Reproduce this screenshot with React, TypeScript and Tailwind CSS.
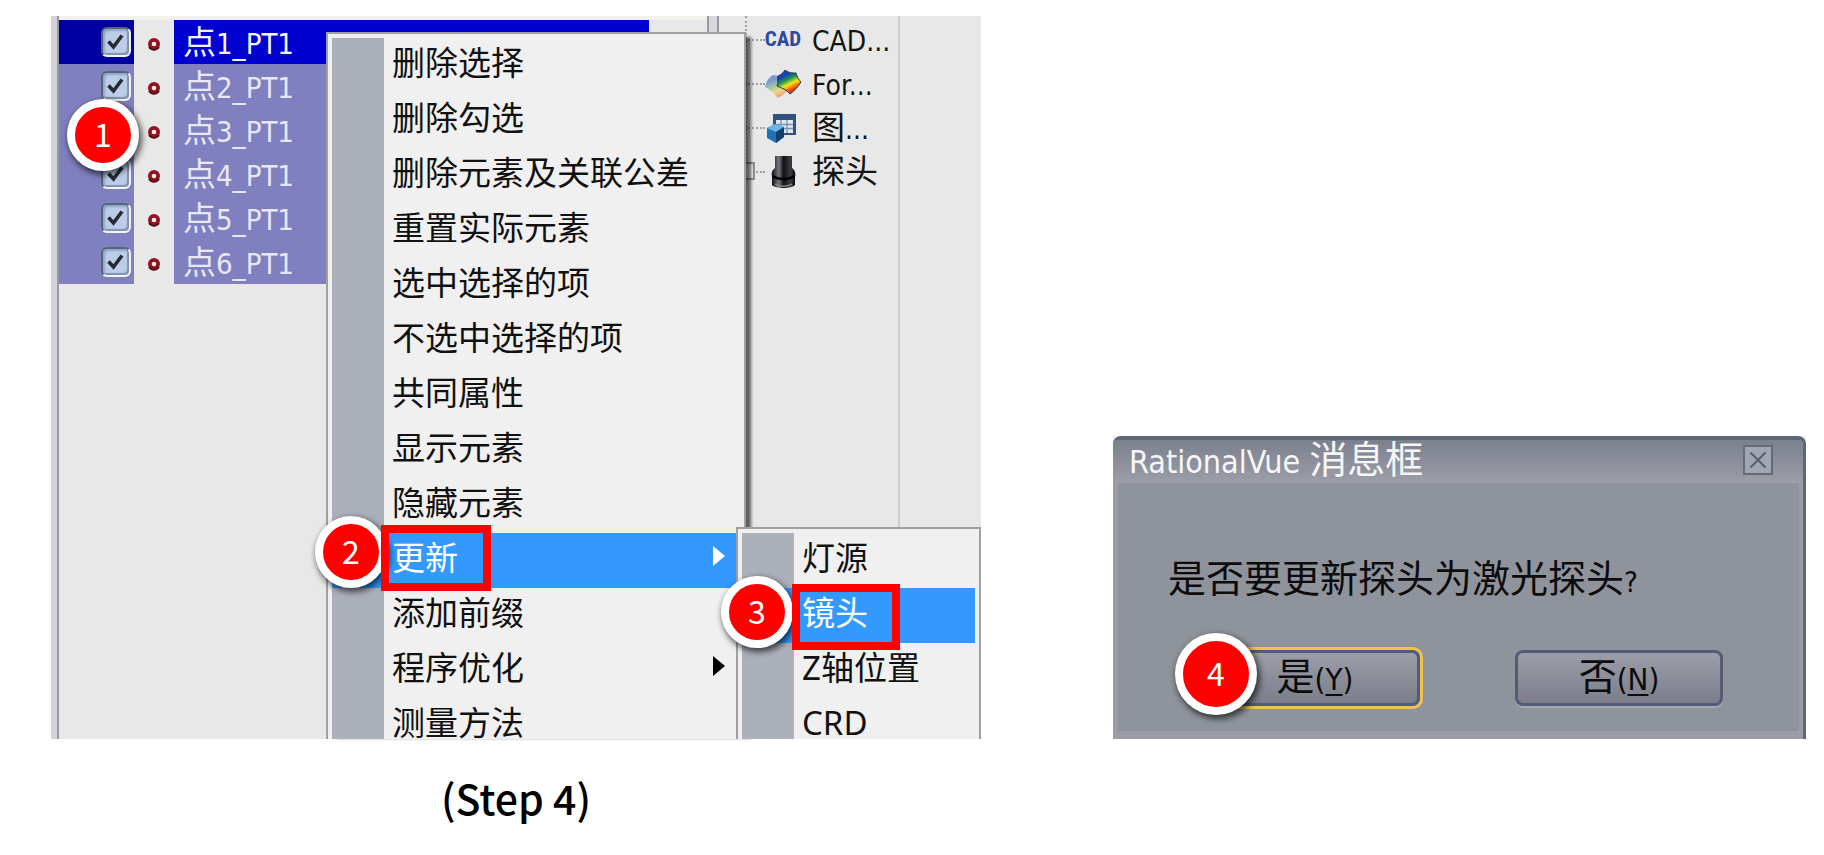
import { ReactNode } from "react";

const points = ["1", "2", "3", "4", "5", "6"];

const menuItems = [
  "删除选择",
  "删除勾选",
  "删除元素及关联公差",
  "重置实际元素",
  "选中选择的项",
  "不选中选择的项",
  "共同属性",
  "显示元素",
  "隐藏元素",
  "更新",
  "添加前缀",
  "程序优化",
  "测量方法",
];

const subItems = ["灯源", "镜头", "Z轴位置", "CRD"];

function Badge({ n, className }: { n: number; className: string }) {
  return (
    <span
      className={`absolute z-10 flex items-center justify-center rounded-full border-8 border-white bg-[#ff0000] font-[family-name:'Noto_Sans_CJK_SC',sans-serif] text-[32px] leading-none text-white shadow-[2px_3px_6px_1px_rgba(0,0,0,0.65)] ${className}`}
    >
      <span className="pb-1">{n}</span>
    </span>
  );
}

function PointRow({ n, first }: { n: string; first: boolean }) {
  const id = `point-${n}`;
  return (
    <li className="relative flex h-11 items-stretch">
      <span
        className={`flex w-[75px] items-center justify-end pr-[3px] ${first ? "bg-[#0000a0]" : "bg-[#8080c0]"}`}
      >
        <span className="relative flex">
          <input
            id={id}
            type="checkbox"
            defaultChecked
            className="peer size-[30px] appearance-none rounded-md border-2 border-t-[#55657a] border-r-[#f0f0f0] border-b-[#f4f4f4] border-l-[#55657a] bg-[#bccdea] shadow-[inset_-2px_-2px_1px_#8292aa,inset_2px_2px_2px_#93a5c0]"
          />
          <svg
            viewBox="0 0 30 30"
            className="pointer-events-none absolute inset-0 hidden size-[30px] peer-checked:block"
            aria-hidden="true"
          >
            <path d="M7.5 14.5 L12.5 20 L21 8.5" fill="none" stroke="#262a33" strokeWidth="3.6" />
          </svg>
        </span>
      </span>
      <span className="flex w-10 items-center justify-center pt-1">
        <svg viewBox="0 0 14 14" className="size-3.5" aria-hidden="true">
          <circle cx="7" cy="7" r="6" fill="#8c1622" />
          <path d="M2 10 A6 6 0 0 0 12 10" fill="none" stroke="#5a0c16" strokeWidth="2" />
          <circle cx="7" cy="7" r="2.3" fill="#ffe8e4" />
        </svg>
      </span>
      <label
        htmlFor={id}
        className={`mr-[58px] flex-1 pt-1 pl-[9px] text-[29px] leading-[40px] whitespace-nowrap ${first ? "bg-[#0000d0] text-[#f4f4ff]" : "bg-[#8080c0] text-[#e8e8f4]"}`}
      >
        <span className="text-[33px] leading-none">点</span>
        {n}_PT1
      </label>
      {n === "3" && <Badge n={1} className="-top-[9px] left-2 size-[72px]" />}
    </li>
  );
}

function TreeRow({ icon, children }: { icon: ReactNode; children: ReactNode }) {
  return (
    <li className="flex h-11 items-center">
      <span className="w-5 border-t-2 border-dotted border-[#a0a0a0]" />
      <span className="flex w-9 justify-center">{icon}</span>
      <span className="pt-[3px] pl-[11px] text-[28px] leading-[41px] whitespace-nowrap text-[#141414]">
        {children}
      </span>
    </li>
  );
}

function MenuRow({
  text,
  active,
  arrow,
  last,
  children,
}: {
  text: string;
  active?: boolean;
  arrow?: boolean;
  last?: boolean;
  children?: ReactNode;
}) {
  return (
    <li className="relative">
      <button
        type="button"
        className={`flex w-full items-stretch text-left font-[family-name:'Noto_Sans','Noto_Sans_CJK_SC',sans-serif] text-[33px] whitespace-nowrap ${last ? "h-[41px]" : "h-[55px]"} ${active ? "bg-[#3399ff] text-white" : "text-[#111111]"}`}
      >
        <span className={`w-[52px] flex-none ${active ? "" : "bg-[#acb0ba]"}`} />
        <span className={`flex-1 pl-2 ${last ? "pt-2 leading-[33px]" : "leading-[49px]"}`}>{text}</span>
        {arrow && (
          <svg viewBox="0 0 12 20" className="mt-[13px] mr-[15px] h-5 w-3" aria-hidden="true">
            <path d="M0 0 L12 10 L0 20 Z" fill={active ? "#ffffff" : "#000000"} />
          </svg>
        )}
      </button>
      {children}
    </li>
  );
}

function SurfaceIcon() {
  return (
    <svg viewBox="0 0 36 28" className="h-7 w-9" aria-hidden="true">
      <defs>
        <linearGradient id="rainbow" x1="0.25" y1="0.1" x2="0.7" y2="1">
          <stop offset="0.15" stopColor="#1c3fb4" />
          <stop offset="0.36" stopColor="#1f9a46" />
          <stop offset="0.56" stopColor="#f6e81c" />
          <stop offset="0.8" stopColor="#f0400c" />
        </linearGradient>
        <linearGradient id="pale" x1="0.3" y1="0" x2="0.7" y2="1">
          <stop offset="0.2" stopColor="#7c98d0" />
          <stop offset="0.5" stopColor="#a8cf9c" />
          <stop offset="0.68" stopColor="#eddc80" />
          <stop offset="0.95" stopColor="#ef8f86" />
        </linearGradient>
      </defs>
      <path d="M8 5 C4 7 1 12 0 17 C4 19 9 23 13 28 C18 25 22 22 24 19 L14 6 Z" fill="url(#pale)" />
      <path
        d="M20 0 C24 3 27 3 31 3 C32 7 34 10 36 12 C33 17 29 21 25 24 C22 20 17 18 12 16 C14 13 12 9 13 6 C16 5 18 3 20 0 Z"
        fill="url(#rainbow)"
        stroke="#2a3250"
        strokeWidth="1"
      />
    </svg>
  );
}

function ViewIcon() {
  return (
    <svg viewBox="0 0 36 30" className="h-[30px] w-9" aria-hidden="true">
      <rect x="8" y="1" width="23" height="21" fill="#33517c" />
      <rect x="11" y="7" width="17" height="13" fill="#dfe6f0" />
      <path d="M11 11.5H28M11 15.5H28M16 7V20M22 7V20" stroke="#7e93b4" strokeWidth="1.3" />
      <path d="M2 15 L10 11 L19 14 L19 24 L11 30 L2 25 Z" fill="#1f73b4" />
      <path d="M2 15 L10 11 L19 14 L11 19 Z" fill="#6bb6e6" />
      <path d="M11 19 L19 14 L19 24 L11 30 Z" fill="#123f6c" />
    </svg>
  );
}

function ProbeIcon() {
  return (
    <svg viewBox="0 0 36 34" className="h-[34px] w-9" aria-hidden="true">
      <defs>
        <linearGradient id="barrel" x1="0" x2="1" y1="0" y2="0">
          <stop offset="0" stopColor="#0a0a0c" />
          <stop offset="0.3" stopColor="#77777e" />
          <stop offset="0.5" stopColor="#111114" />
          <stop offset="0.8" stopColor="#3c3c42" />
          <stop offset="1" stopColor="#050506" />
        </linearGradient>
      </defs>
      <path
        d="M10 1 H27 V13 C30 15 31 19 30 22 V30 C27 34 10 34 7 30 V22 C6 18 7 15 10 13 Z"
        fill="url(#barrel)"
      />
      <path d="M8 21 C13 25 24 25 29 21" fill="none" stroke="#000" strokeWidth="2.5" />
      <path d="M10 29 C14 32 23 32 27 29" fill="none" stroke="#8a8a90" strokeWidth="1.5" />
    </svg>
  );
}

export default function App() {
  return (
    <main className="grid min-h-screen grid-cols-[930fr_693fr] grid-rows-[auto_1fr] gap-x-[132px] bg-white pt-4 pr-[18px] pl-[51px] font-[family-name:'DejaVu_Sans_Condensed','Noto_Sans_CJK_SC',sans-serif]">
      <section className="grid bg-[#e8e8e8]">
        <div className="col-start-1 row-start-1 flex">
          <div className="w-2 flex-none border-r-2 border-[#9a9a9e] bg-[#d2d2d8]" />
          <ul className="flex-1 border-t-4 border-[#f2f2ea]">
            {points.map((n, i) => (
              <PointRow key={n} n={n} first={i === 0} />
            ))}
          </ul>
          <div className="w-3 flex-none border-x-2 border-[#9a9a9e] bg-[#d8d8de]" />
          <div className="w-[262px] flex-none pl-[26px]">
            <ul className="relative h-full w-[155px] border-r-2 border-[#cccccc] pt-0.5">
              <TreeRow
                icon={
                  <span className="font-[family-name:'Roboto_Condensed','Liberation_Sans',sans-serif] text-[21px] font-bold text-[#2c4a9c]">
                    CAD
                  </span>
                }
              >
                CAD...
              </TreeRow>
              <TreeRow icon={<SurfaceIcon />}>For...</TreeRow>
              <TreeRow icon={<ViewIcon />}>
                <span className="text-[33px] leading-none">图</span>...
              </TreeRow>
              <TreeRow icon={<ProbeIcon />}>
                <span className="text-[33px] leading-none">探头</span>
              </TreeRow>
              <li
                aria-hidden="true"
                className="absolute top-0 left-0 h-[155px] border-l-2 border-dotted border-[#a0a0a0]"
              />
              <li
                aria-hidden="true"
                className="absolute top-[146px] -left-2 size-[18px] border-2 border-[#909090] bg-[#e8e8e8]"
              />
            </ul>
          </div>
        </div>

        <ul className="z-10 col-start-1 row-start-1 mt-4 ml-[275px] w-[420px] border-2 border-b-0 border-[#a0a0a0] bg-[#f0f0f0] p-1 pb-0 shadow-[8px_2px_3px_-3px_rgba(0,0,0,0.6)]">
          {menuItems.map((text) =>
            text === "更新" ? (
              <MenuRow key={text} text={text} active arrow>
                <Badge n={2} className="-top-[17px] -left-[17px] size-[72px]" />
                <span className="pointer-events-none absolute -top-2 left-[49px] z-10 h-[66px] w-[110px] border-8 border-[#ff0000]" />
                <ul className="absolute -top-1.5 left-full z-10 -ml-1 w-[245px] border-2 border-b-0 border-[#a0a0a0] bg-[#f0f0f0] p-1 pb-0">
                  {subItems.map((sub) => (
                    <MenuRow key={sub} text={sub} active={sub === "镜头"} last={sub === "CRD"}>
                      {sub === "镜头" && (
                        <>
                          <Badge n={3} className="-top-3 -left-[21px] size-[72px]" />
                          <span className="pointer-events-none absolute -top-1 left-[50px] z-10 h-[66px] w-[108px] border-8 border-[#ff0000]" />
                        </>
                      )}
                    </MenuRow>
                  ))}
                </ul>
              </MenuRow>
            ) : (
              <MenuRow
                key={text}
                text={text}
                arrow={text === "程序优化"}
                last={text === "测量方法"}
              />
            ),
          )}
        </ul>
      </section>

      <section className="self-end bg-[#eeeeee]" role="dialog" aria-label="RationalVue 消息框">
        <div className="rounded-t-lg border-t-4 border-r-[3px] border-t-[#5e667a] border-r-[#5e667a] bg-[#9a9da8]">
          <header className="flex h-[43px] items-center justify-between rounded-t bg-linear-to-b from-[#7c808d] to-[#9c9ea9] pr-[30px] pl-4">
            <h1 className="text-[32px] leading-[40px] whitespace-nowrap text-[#f6f6f6]">
              RationalVue <span className="text-[38px] leading-none">消息框</span>
            </h1>
            <button
              type="button"
              aria-label="关闭"
              className="mb-1 flex size-[30px] items-center justify-center border-2 border-[#666a76] bg-[#a2a6b4]"
            >
              <svg viewBox="0 0 18 18" className="size-[18px]" aria-hidden="true">
                <path d="M1.5 1.5 L16.5 16.5 M16.5 1.5 L1.5 16.5" stroke="#5c606c" strokeWidth="2.2" />
              </svg>
            </button>
          </header>
          <div className="mr-1 ml-[5px] bg-[#8f939c] pt-[75px] pb-[22px]">
            <p className="pl-[50px] text-[29px] leading-[48px] whitespace-nowrap text-[#0c0c0c]">
              <span className="text-[38px] leading-none">是否要更新探头为激光探头</span>?
            </p>
            <div className="relative mt-[41px] flex items-center justify-between pr-[76px] pl-[89px]">
              <button
                type="button"
                className="h-[62px] w-[216px] rounded-[10px] border-[3px] border-[#eec24c] text-[31px] text-[#0c0c0c]"
              >
                <span className="flex h-full items-baseline justify-center rounded-lg border-[3px] border-[#525c76] bg-linear-to-b from-[#9c9eaa] to-[#7b7e8a] leading-[52px]">
                  <span className="text-[38px] leading-none">是</span>(
                  <u className="decoration-2 underline-offset-4">Y</u>)
                </span>
              </button>
              <button
                type="button"
                className="h-14 w-[208px] rounded-lg border-[3px] border-[#525c76] bg-linear-to-b from-[#9c9eaa] to-[#7b7e8a] text-[31px] text-[#0c0c0c] shadow-[0_2px_0_#a6a8b2]"
              >
                <span className="flex items-baseline justify-center leading-[52px]">
                  <span className="text-[38px] leading-none">否</span>(
                  <u className="decoration-2 underline-offset-4">N</u>)
                </span>
              </button>
              <Badge n={4} className="-top-[14px] left-[57px] size-[82px]" />
            </div>
          </div>
          <div className="h-2" />
        </div>
      </section>

      <p className="mt-7 text-center font-[family-name:'Noto_Sans_CJK_SC',sans-serif] text-[41px] leading-[60px] font-medium text-black">
        (Step 4)
      </p>
    </main>
  );
}
